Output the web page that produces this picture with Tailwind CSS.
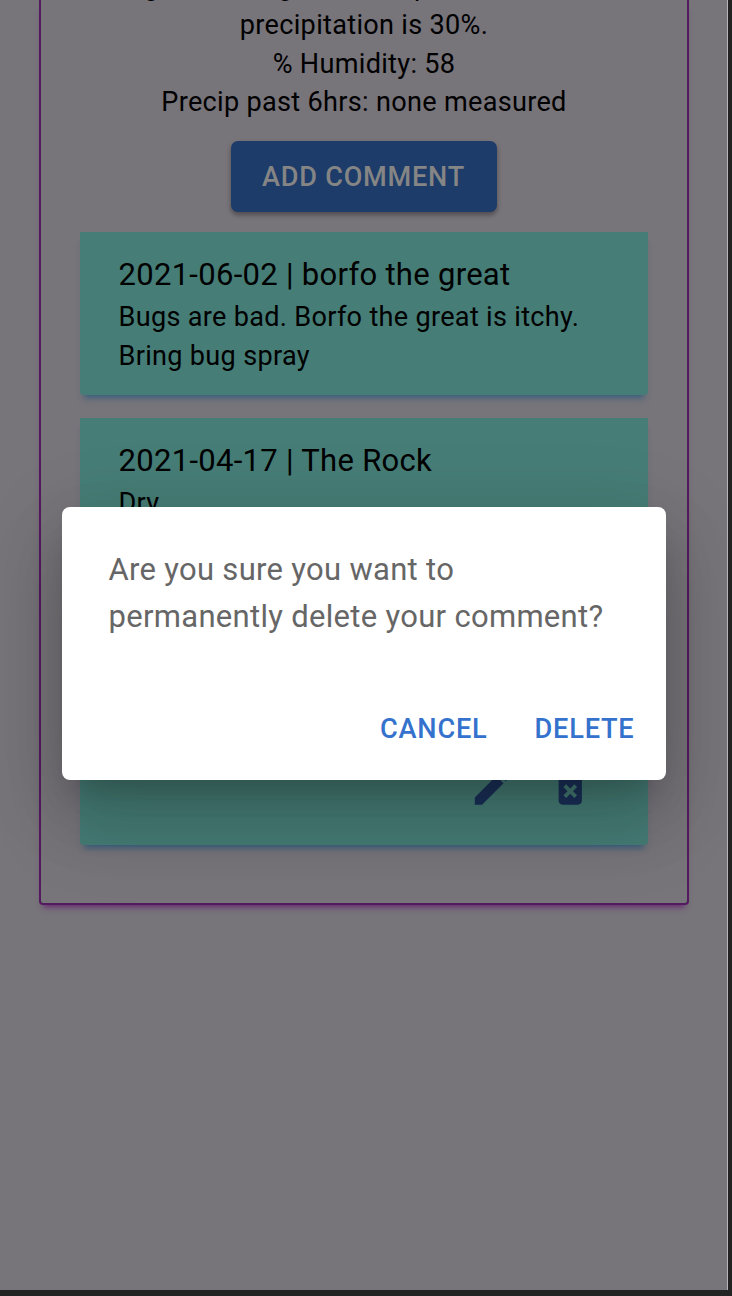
<!DOCTYPE html>
<html lang="en">
<head>
<meta charset="utf-8">
<title>Trail comments</title>
<script src="https://cdn.jsdelivr.net/npm/@tailwindcss/browser@4"></script>
</head>
<body class="h-[1296px] w-[732px] overflow-hidden bg-[#232324] font-[Roboto,sans-serif] text-black">
<div class="relative h-[1290px] w-[728px] overflow-hidden border-r border-[#b5b4b8] bg-[#77747a]">
  <main class="ml-[39px] flex h-[905px] w-[650px] flex-col items-center rounded-b-[4px] border-x-2 border-b-2 border-[#541a5f] px-[39px] shadow-[0_6px_6px_-4px_rgba(100,20,112,0.8)]">
    <div class="-mt-[33.500px] text-center text-[27.100px] leading-[38.600px] tracking-[0.3px] whitespace-nowrap">
      <p class="mb-px">gusts as high as 20 mph. Chance of</p>
      <p>precipitation is 30%.</p>
      <p>% Humidity: 58</p>
      <p>Precip past 6hrs: none measured</p>
    </div>
    <button class="mt-[19.500px] h-[71px] w-[266px] shrink-0 rounded-[7px] bg-[#1d3c69] pt-px pr-[1px] text-[27.100px] font-medium tracking-[0.77px] text-[#858585] shadow-[0_3px_5px_rgba(0,0,0,0.35)]">ADD COMMENT</button>
    <article class="mt-[20px] h-[163px] w-[568px] shrink-0 rounded-b-[4px] bg-[#467d76] pr-[39px] pl-[38.500px] pt-[20px] shadow-[0_7px_6px_-4px_rgba(50,92,125,0.9)]">
      <h2 class="text-[31px] leading-[46px] tracking-[0.29px]">2021-06-02 | borfo the great</h2>
      <p class="text-[27.100px] leading-[38.600px] tracking-[0.3px]">Bugs are bad. Borfo the great is itchy. Bring bug spray</p>
    </article>
    <article class="mt-[23px] flex h-[427px] w-[568px] shrink-0 flex-col rounded-b-[4px] bg-[#467d76] pr-[39px] pl-[38.500px] pt-[20px] shadow-[0_7px_6px_-4px_rgba(50,92,125,0.9)]">
      <h2 class="text-[31px] leading-[46px] tracking-[0.3px]">2021-04-17 | The Rock</h2>
      <p class="text-[27.100px] leading-[38.600px] tracking-[0.3px]">Dry</p>
      <div class="mt-auto mr-[15.500px] mb-[35px] flex justify-end gap-[32px] text-[#1b315b]">
        <svg class="size-[46.500px]" viewBox="0 0 24 24" fill="currentColor"><path d="M3 17.25V21h3.75L17.81 9.94l-3.75-3.75L3 17.25zM20.71 7.04a1 1 0 0 0 0-1.41l-2.34-2.34a1 1 0 0 0-1.41 0l-1.83 1.83 3.75 3.75 1.83-1.83z"/></svg>
        <svg class="size-[46.500px]" viewBox="0 0 24 24" fill="currentColor"><path d="M6 19c0 1.100.9 2 2 2h8c1.100 0 2-.9 2-2V7H6v12zm2.460-7.120 1.410-1.410L12 12.590l2.120-2.120 1.410 1.410L13.410 14l2.120 2.120-1.410 1.410L12 15.410l-2.120 2.120-1.410-1.410L10.590 14l-2.130-2.120zM15.500 4l-1-1h-5l-1 1H5v2h14V4z"/></svg>
      </div>
    </article>
  </main>
  <section role="dialog" class="absolute top-[507px] left-[62px] flex h-[272.500px] w-[603.500px] flex-col rounded-[8px] bg-white shadow-[0_21px_29px_-14px_rgba(0,0,0,0.2),0_46px_73px_6px_rgba(0,0,0,0.13),0_17px_80px_10px_rgba(0,0,0,0.11)]">
    <p class="px-[46.500px] pt-[39px] text-[31px] leading-[47px] tracking-[0.3px] text-[#666]">Are you sure you want to permanently delete your comment?</p>
    <div class="mt-auto mr-[31px] mb-[32px] flex justify-end gap-[47px] text-[27.200px] leading-[38px] font-medium tracking-[0.77px] text-[#3472cd]">
      <button>CANCEL</button>
      <button>DELETE</button>
    </div>
  </section>
</div>
</body>
</html>
